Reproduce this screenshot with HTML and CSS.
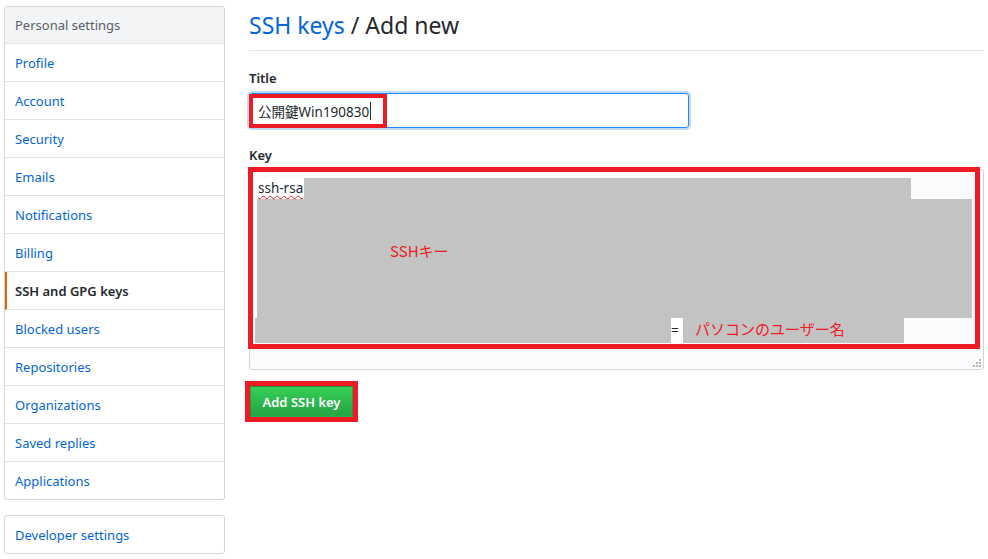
FILE: index.html
```html
<!DOCTYPE html>
<html lang="ja">
<head>
<meta charset="utf-8">
<title>SSH keys / Add new</title>
<link rel="stylesheet" href="styles.css">
</head>
<body>
<div class="page">
  <nav class="sidebar">
    <div class="menu">
      <div class="menu-heading">Personal settings</div>
      <a class="menu-item" href="#">Profile</a>
      <a class="menu-item" href="#">Account</a>
      <a class="menu-item" href="#">Security</a>
      <a class="menu-item" href="#">Emails</a>
      <a class="menu-item" href="#">Notifications</a>
      <a class="menu-item" href="#">Billing</a>
      <a class="menu-item selected" href="#">SSH and GPG keys</a>
      <a class="menu-item" href="#">Blocked users</a>
      <a class="menu-item" href="#">Repositories</a>
      <a class="menu-item" href="#">Organizations</a>
      <a class="menu-item" href="#">Saved replies</a>
      <a class="menu-item last" href="#">Applications</a>
    </div>
    <div class="menu dev">
      <a class="menu-item last" href="#">Developer settings</a>
    </div>
  </nav>
  <main class="main">
    <h2 class="subhead"><a href="#">SSH keys</a> / Add new</h2>
    <form class="form">
      <label class="label">Title</label>
      <div class="input">
        <span class="input-text">公開鍵Win190830</span><span class="caret"></span>
        <div class="mark mark-title"></div>
      </div>
      <label class="label key-label">Key</label>
      <div class="textarea">
        <div class="key-row first">
          <span class="plain"><span class="squiggle">ssh-rsa</span></span>
          <span class="grey g1"></span>
        </div>
        <div class="grey g2"><span class="note">SSHキー</span></div>
        <div class="key-row last-row">
          <span class="grey g3"></span>
          <span class="plain eq">=</span>
          <span class="grey g4"><span class="note">パソコンのユーザー名</span></span>
        </div>
        <div class="mark mark-key"></div>
        <svg class="grip" width="8" height="8" viewBox="0 0 8 8">
          <rect x="6" y="0" width="2" height="2" fill="#b5b8bc"/>
          <rect x="3" y="3" width="2" height="2" fill="#b5b8bc"/>
          <rect x="6" y="3" width="2" height="2" fill="#b5b8bc"/>
          <rect x="0" y="6" width="2" height="2" fill="#b5b8bc"/>
          <rect x="3" y="6" width="2" height="2" fill="#b5b8bc"/>
          <rect x="6" y="6" width="2" height="2" fill="#b5b8bc"/>
        </svg>
      </div>
      <div class="btn-mark">
        <button type="button" class="btn">Add SSH key</button>
      </div>
    </form>
  </main>
</div>
</body>
</html>
```
FILE: styles.css
```css
* { box-sizing: border-box; }
html, body { margin: 0; padding: 0; background: #fff; }
body {
  font-family: "Noto Sans", "Noto Sans CJK JP", sans-serif;
  font-size: 14px;
  color: #24292e;
}
a { text-decoration: none; color: #0366d6; }

.page {
  display: flex;
  align-items: flex-start;
  padding: 6px 0 0 4px;
}

.sidebar { width: 221px; flex: none; }
.menu {
  border: 1px solid #d1d5da;
  border-radius: 3px;
  background: #fff;
  overflow: hidden;
}
.menu-heading {
  height: 37px;
  padding: 0 10px;
  display: flex;
  align-items: center;
  background: #f3f4f6;
  color: #586069;
  font-size: 13px;
  border-bottom: 1px solid #e1e4e8;
}
.menu-item {
  display: flex;
  align-items: center;
  height: 38px;
  padding: 0 10px;
  border-bottom: 1px solid #e1e4e8;
  color: #0366d6;
  font-size: 13px;
}
.menu-item.last { border-bottom: 0; height: 37px; }
.menu-item.selected {
  color: #24292e;
  font-weight: 600;
  border-left: 2px solid #e36209;
  padding-left: 8px;
}
.dev { margin-top: 15px; }

.main {
  width: 735px;
  flex: none;
  margin-left: 24px;
}
.subhead {
  margin: 0;
  height: 45px;
  padding-top: 3px;
  font-size: 23px;
  font-weight: 400;
  color: #24292e;
  border-bottom: 1px solid #e1e4e8;
  line-height: 32px;
}
.subhead a { color: #0366d6; }

.form { padding-top: 17px; }
.label {
  display: block;
  font-weight: 600;
  font-size: 13px;
  line-height: 20px;
  margin-bottom: 5px;
}
.input {
  position: relative;
  width: 440px;
  height: 35px;
  border: 1px solid #2188ff;
  border-radius: 3px;
  box-shadow: 0 0 0 2px rgba(3, 102, 214, 0.25);
  display: flex;
  align-items: center;
  padding-left: 8px;
  font-size: 13.5px;
  font-family: "Noto Sans", "Noto Sans CJK JP", sans-serif;
}
.caret {
  display: inline-block;
  width: 1px;
  height: 18px;
  background: #24292e;
  margin-left: 1px;
}
.mark {
  position: absolute;
  border: 4px solid #ed1c24;
  pointer-events: none;
}
.mark-title { left: -1px; top: 0; width: 138px; height: 34px; }

.key-label { margin-top: 17px; margin-bottom: 4px; }
.textarea {
  position: relative;
  width: 735px;
  height: 201px;
  border: 1px solid #d1d5da;
  border-radius: 3px;
  background: #fafbfc;
  padding: 8px 11px 0 7px;
  font-size: 13.5px;
}
.key-row { display: flex; height: 21px; }
.plain { background: #fff; line-height: 21px; padding: 0 1px; }
.squiggle {
  text-decoration: underline wavy #ed1c24;
  text-decoration-thickness: 1px;
  text-underline-offset: 2px;
}
.grey { background: #c3c3c3; display: block; }
.g1 { width: 607px; }
.g2 { height: 119px; width: 715px; padding: 42px 0 0 133px; }
.note { color: #ed1c24; font-size: 15px; line-height: 20px; font-family: "Noto Sans CJK JP", sans-serif; }
.last-row { height: 25px; margin-left: -2px; }
.g3 { width: 416px; }
.eq { width: 12px; padding: 0; line-height: 25px; }
.g4 { width: 221px; padding-left: 12px; line-height: 25px; }
.mark-key { left: -2px; top: -3px; width: 732px; height: 182px; border-width: 5px; }
.grip { position: absolute; right: 2px; bottom: 2px; }

.btn-mark {
  display: inline-block;
  margin: 11px 0 0 -4px;
  border: 5px solid #ed1c24;
}
.btn {
  display: block;
  width: 103px;
  height: 31px;
  border: 1px solid rgba(27, 31, 35, 0.2);
  border-radius: 0;
  background: linear-gradient(-180deg, #34d058 0%, #28a745 90%);
  color: #fff;
  font-family: "Noto Sans", sans-serif;
  font-size: 13px;
  font-weight: 600;
  padding: 0;
}
```
